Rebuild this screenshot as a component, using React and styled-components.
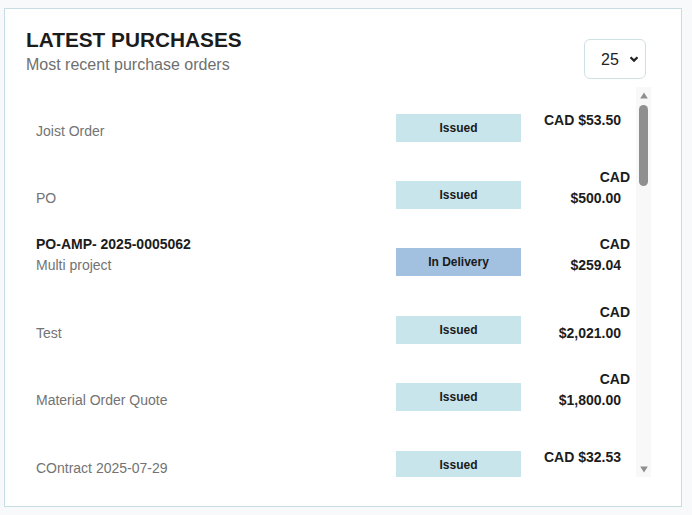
import React from "react";
import styled, { createGlobalStyle } from "styled-components";

const GlobalStyle = createGlobalStyle`
  html, body { margin: 0; padding: 0; background: #f8f9fa; }
  body { font-family: "Liberation Sans", Arial, sans-serif; }
  * { box-sizing: border-box; }
`;

const Page = styled.div`
  padding: 8px 10px 8px 4px;
`;

const Card = styled.section`
  background: #ffffff;
  border: 1px solid #c5dde3;
  height: 499px;
  padding: 18px 30px 0 21px;
  display: flex;
  flex-direction: column;
`;

const Header = styled.header`
  display: flex;
  justify-content: space-between;
  align-items: flex-end;
`;

const TitleBlock = styled.div`
  display: flex;
  flex-direction: column;
`;

const Title = styled.h2`
  margin: 0;
  font-size: 20.8px;
  line-height: 26px;
  font-weight: 700;
  color: #1c1c1c;
`;

const Subtitle = styled.p`
  margin: 0;
  font-size: 16px;
  line-height: 24px;
  color: #6f6f6f;
`;

const Select = styled.select`
  appearance: none;
  -webkit-appearance: none;
  width: 62px;
  height: 40px;
  margin: 0 5px -2px 0;
  padding: 0 0 0 16px;
  border: 1px solid #cfe0e4;
  border-radius: 6px;
  background-color: #fff;
  background-image: url("data:image/svg+xml,%3Csvg xmlns='http://www.w3.org/2000/svg' width='10' height='8' viewBox='0 0 10 8'%3E%3Cpath d='M1.5 2.2 L5 5.6 L8.5 2.2' fill='none' stroke='%23222' stroke-width='2.2'/%3E%3C/svg%3E");
  background-repeat: no-repeat;
  background-position: right 6px center;
  font-family: "Liberation Sans", Arial, sans-serif;
  font-size: 16px;
  color: #222;
`;

const ListWrap = styled.div`
  margin-top: 10px;
  height: 390px;
  display: flex;
`;

const Scroller = styled.div`
  flex: 1;
  min-width: 0;
  overflow-y: auto;
  scrollbar-width: none;
  &::-webkit-scrollbar { display: none; }
`;

const Track = styled.div`
  width: 15px;
  flex: none;
  background: #f8f8f8;
  display: flex;
  flex-direction: column;
  align-items: center;
`;

const ArrowButton = styled.div`
  width: 15px;
  height: 15px;
  flex: none;
  display: flex;
  align-items: ${(p) => (p.$down ? "flex-start" : "flex-end")};
  padding: ${(p) => (p.$down ? "4px 0 0" : "0 0 3px")};
  justify-content: center;
`;

const Thumb = styled.div`
  width: 9px;
  height: 81px;
  margin-top: 3px;
  border-radius: 5px;
  background: #8f8f8f;
`;

const Spacer = styled.div`
  flex: 1;
`;

const Row = styled.div`
  display: grid;
  grid-template-columns: 1fr 125px 88px;
  column-gap: 21px;
  align-items: center;
  padding: 12.7px 6px 12.7px 10px;
`;

const NameCol = styled.div`
  display: flex;
  flex-direction: column;
  font-size: 14px;
  line-height: 21px;
`;

const OrderNo = styled.span`
  min-height: 21px;
  font-weight: 700;
  color: #1c1c1c;
`;

const OrderName = styled.span`
  color: #737373;
`;

const Badge = styled.div`
  margin-top: 14px;
  height: 28px;
  display: flex;
  align-items: center;
  justify-content: center;
  font-size: 12px;
  font-weight: 700;
  color: #1a1a1a;
  background: ${(p) => (p.$status === "In Delivery" ? "#a2c1e0" : "#c8e5eb")};
`;

const Amount = styled.div`
  text-align: right;
  font-size: 14px;
  line-height: 21px;
  font-weight: 700;
  color: #1c1c1c;
`;

const Value = styled.span`
  margin-right: 9px;
`;

const Triangle = ({ down }) => (
  <svg width="8" height="7" viewBox="0 0 8 7">
    <path d={down ? "M0.2 0.5 L7.8 0.5 L4 6.5 Z" : "M4 0.5 L7.8 6.5 L0.2 6.5 Z"} fill="#8f8f8f" />
  </svg>
);

const orders = [
  { no: "", name: "Joist Order", status: "Issued", amount: "$53.50" },
  { no: "", name: "PO", status: "Issued", amount: "$500.00" },
  { no: "PO-AMP- 2025-0005062", name: "Multi project", status: "In Delivery", amount: "$259.04" },
  { no: "", name: "Test", status: "Issued", amount: "$2,021.00" },
  { no: "", name: "Material Order Quote", status: "Issued", amount: "$1,800.00" },
  { no: "", name: "COntract 2025-07-29", status: "Issued", amount: "$32.53" },
  { no: "", name: "Lumber Package", status: "Issued", amount: "$4,120.00" },
  { no: "PO-AMP- 2025-0005048", name: "Framing", status: "In Delivery", amount: "$870.25" },
  { no: "", name: "Drywall Order", status: "Issued", amount: "$615.40" },
  { no: "", name: "Roofing Supplies", status: "Issued", amount: "$2,310.00" },
  { no: "", name: "Concrete", status: "Issued", amount: "$1,150.00" },
  { no: "", name: "Windows", status: "In Delivery", amount: "$3,480.00" },
  { no: "", name: "Doors", status: "Issued", amount: "$940.00" },
  { no: "", name: "Insulation", status: "Issued", amount: "$420.75" },
  { no: "", name: "Electrical", status: "Issued", amount: "$1,275.00" },
  { no: "", name: "Plumbing Fixtures", status: "Issued", amount: "$688.10" },
  { no: "", name: "Hardware", status: "Issued", amount: "$75.20" },
  { no: "", name: "Siding", status: "Issued", amount: "$2,900.00" },
  { no: "", name: "Flooring", status: "In Delivery", amount: "$1,640.00" },
  { no: "", name: "Trim Order", status: "Issued", amount: "$310.00" },
  { no: "", name: "Paint", status: "Issued", amount: "$215.60" },
  { no: "", name: "Fasteners", status: "Issued", amount: "$48.90" },
  { no: "", name: "Cabinets", status: "Issued", amount: "$5,200.00" },
  { no: "", name: "Countertops", status: "Issued", amount: "$2,750.00" },
  { no: "", name: "Test PO", status: "Issued", amount: "$100.00" },
];

export default function App() {
  return (
    <>
      <GlobalStyle />
      <Page>
        <Card>
          <Header>
            <TitleBlock>
              <Title>LATEST PURCHASES</Title>
              <Subtitle>Most recent purchase orders</Subtitle>
            </TitleBlock>
            <Select defaultValue="25" aria-label="Rows">
              <option value="10">10</option>
              <option value="25">25</option>
              <option value="50">50</option>
            </Select>
          </Header>
          <ListWrap>
            <Scroller>
              {orders.map((o, i) => (
                <Row key={i}>
                  <NameCol>
                    <OrderNo>{o.no}</OrderNo>
                    <OrderName>{o.name}</OrderName>
                  </NameCol>
                  <Badge $status={o.status}>{o.status}</Badge>
                  <Amount>
                    <span>CAD</span> <Value>{o.amount}</Value>
                  </Amount>
                </Row>
              ))}
            </Scroller>
            <Track aria-hidden="true">
              <ArrowButton>
                <Triangle />
              </ArrowButton>
              <Thumb />
              <Spacer />
              <ArrowButton $down>
                <Triangle down />
              </ArrowButton>
            </Track>
          </ListWrap>
        </Card>
      </Page>
    </>
  );
}
